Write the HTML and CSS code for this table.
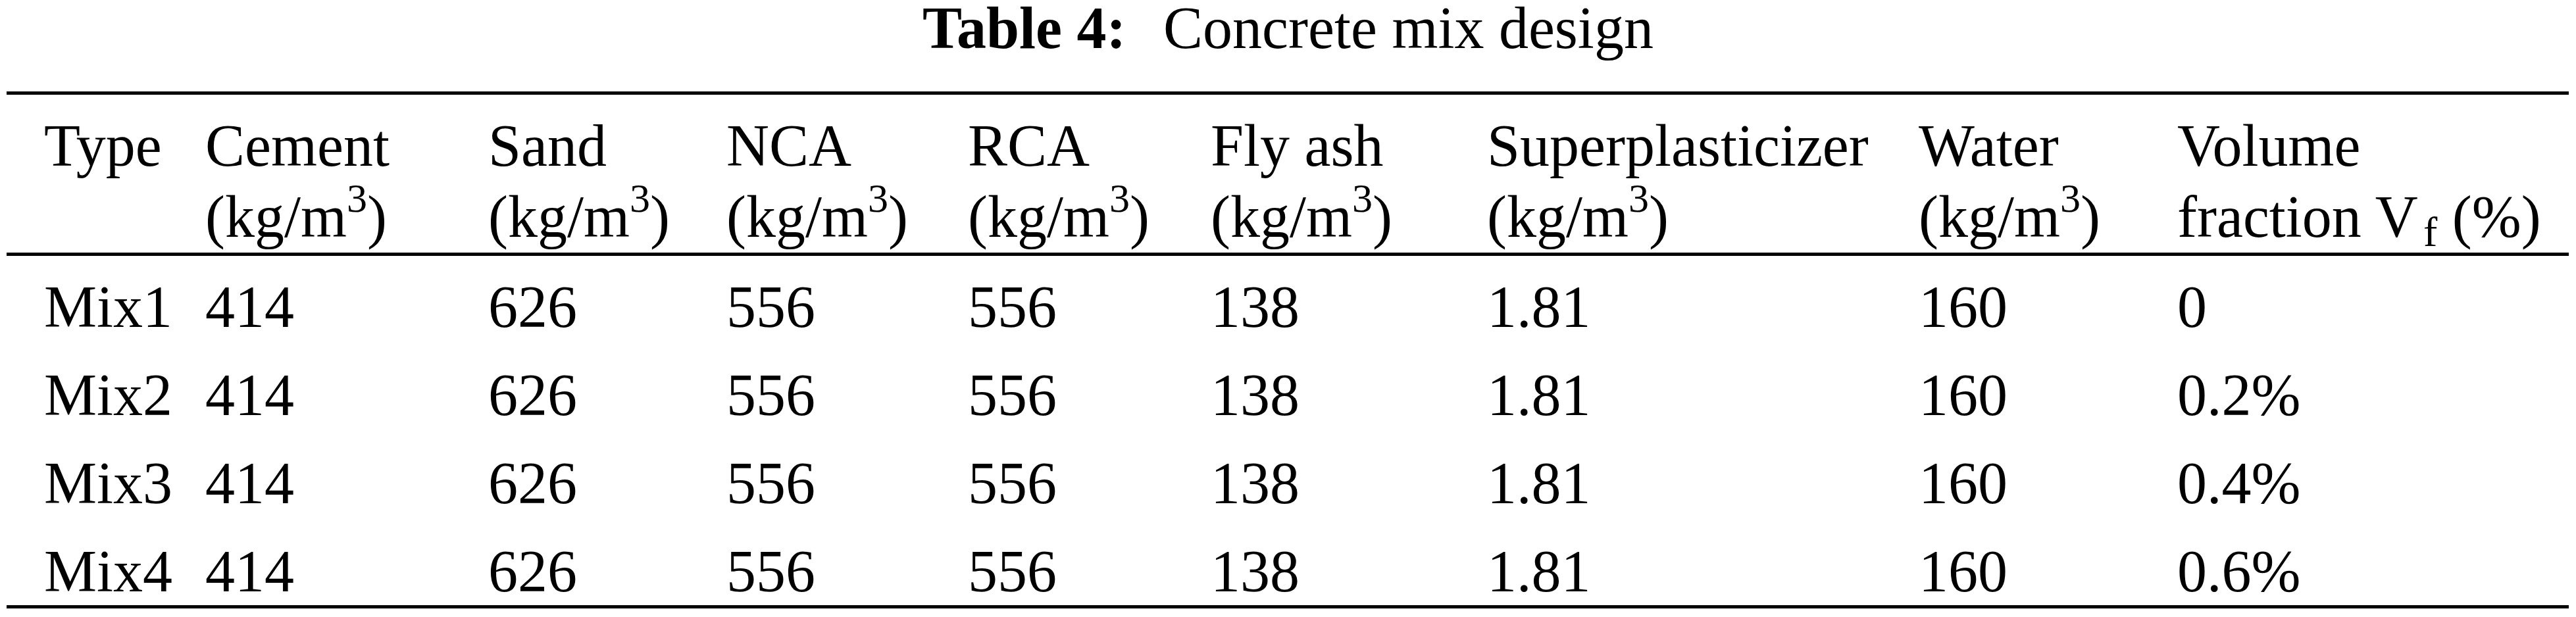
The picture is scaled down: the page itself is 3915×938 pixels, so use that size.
FILE: index.html
```html
<!DOCTYPE html>
<html lang="en">
<head>
  <meta charset="UTF-8">
  <title>Table 4: Concrete mix design</title>
  <link rel="stylesheet" href="styles.css">
</head>
<body>
  <div class="caption"><span class="caption-label">Table 4:</span> Concrete mix design</div>

  <table class="mix-table">
    <colgroup>
      <col class="c-type">
      <col class="c-cement">
      <col class="c-sand">
      <col class="c-nca">
      <col class="c-rca">
      <col class="c-fly">
      <col class="c-sp">
      <col class="c-water">
      <col class="c-vf">
    </colgroup>
    <thead>
      <tr>
        <th>Type</th>
        <th>Cement<br>(kg/m<sup>3</sup>)</th>
        <th>Sand<br>(kg/m<sup>3</sup>)</th>
        <th>NCA<br>(kg/m<sup>3</sup>)</th>
        <th>RCA<br>(kg/m<sup>3</sup>)</th>
        <th>Fly ash<br>(kg/m<sup>3</sup>)</th>
        <th>Superplasticizer<br>(kg/m<sup>3</sup>)</th>
        <th>Water<br>(kg/m<sup>3</sup>)</th>
        <th>Volume<br>fraction V<sub>f</sub> (%)</th>
      </tr>
    </thead>
    <tbody>
      <tr>
        <td>Mix1</td><td>414</td><td>626</td><td>556</td><td>556</td><td>138</td><td>1.81</td><td>160</td><td>0</td>
      </tr>
      <tr>
        <td>Mix2</td><td>414</td><td>626</td><td>556</td><td>556</td><td>138</td><td>1.81</td><td>160</td><td>0.2%</td>
      </tr>
      <tr>
        <td>Mix3</td><td>414</td><td>626</td><td>556</td><td>556</td><td>138</td><td>1.81</td><td>160</td><td>0.4%</td>
      </tr>
      <tr>
        <td>Mix4</td><td>414</td><td>626</td><td>556</td><td>556</td><td>138</td><td>1.81</td><td>160</td><td>0.6%</td>
      </tr>
    </tbody>
  </table>
</body>
</html>
```

FILE: styles.css
```css
* {
  box-sizing: border-box;
}

body {
  margin: 0;
  background: #fff;
  color: #000;
  font-family: "Liberation Serif", "Times New Roman", serif;
  font-size: 90px;
}

/* caption above the table */
.caption {
  text-align: center;
  line-height: 86px;
  height: 139px;
}

.caption-label {
  font-weight: bold;
  margin-right: 0.38em;
}

.mix-table {
  margin-left: 10px;
  width: 3894px;
  table-layout: fixed;
  border-collapse: separate;
  border-spacing: 0;
}

.c-type { width: 302px; }
.c-cement { width: 430px; }
.c-sand { width: 362px; }
.c-nca { width: 367px; }
.c-rca { width: 369px; }
.c-fly { width: 420px; }
.c-sp { width: 656px; }
.c-water { width: 393px; }
.c-vf { width: 595px; }

.mix-table th,
.mix-table td {
  padding: 0;
  text-align: left;
  vertical-align: top;
  font-weight: normal;
  white-space: nowrap;
}

.mix-table th:first-child,
.mix-table td:first-child {
  padding-left: 57px;
}

/* header rows, thick rules above and below */
.mix-table th {
  line-height: 108px;
  padding-top: 24px;
  border-top: 5px solid #000;
  border-bottom: 5px solid #000;
}

.mix-table td {
  line-height: 100px;
  padding-top: 28px;
  padding-bottom: 6px;
}

.mix-table tbody tr:last-child td {
  padding-bottom: 1px;
  border-bottom: 5px solid #000;
}

sup {
  font-size: 0.69em;
  line-height: 0;
  vertical-align: 0.62em;
}

sub {
  font-size: 0.71em;
  line-height: 0;
  vertical-align: -0.22em;
  margin-left: 0.13em;
}
```
